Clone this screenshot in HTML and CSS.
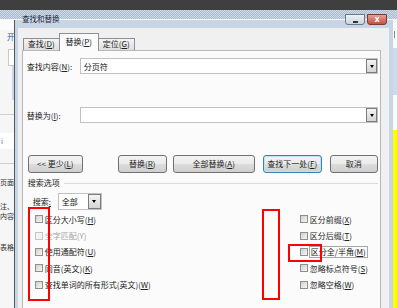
FILE: index.html
```html
<!DOCTYPE html>
<html>
<head>
<link rel="stylesheet" href="styles.css">
</head>
<body>

<div class="topbar"></div>
<div class="glass"></div>

<div class="desk">
    <div class="doc">
        <div class="doc-head"></div>
        <div class="doc-tab">开</div>
        <div class="doc-box"></div>
        <div class="doc-scroll"></div>
        <div class="doc-rule"></div>
        <div class="doc-field">i</div>
        <div class="doc-rule"></div>
        <div class="doc-text first">页面</div>
        <div class="doc-text gap">注、</div>
        <div class="doc-text">内容</div>
        <div class="doc-text gap2">表格</div>
    </div>

    <div class="dialog">
        <div class="client">
            <div class="tabs">
                <div class="tab">查找(<u>D</u>)</div>
                <div class="tab active">替换(<u>P</u>)</div>
                <div class="tab">定位(<u>G</u>)</div>
            </div>

            <div class="panel">
                <div class="field">
                    <label>查找内容(<u>N</u>):</label>
                    <div class="combo"><span class="value">分页符</span><span class="drop"></span></div>
                </div>
                <div class="field second">
                    <label>替换为(<u>I</u>):</label>
                    <div class="combo"><span class="value"></span><span class="drop"></span></div>
                </div>

                <div class="buttons">
                    <div class="btn less">&lt;&lt; 更少(<u>L</u>)</div>
                    <div class="btn replace">替换(<u>R</u>)</div>
                    <div class="btn replace-all">全部替换(<u>A</u>)</div>
                    <div class="btn find-next">查找下一处(<u>F</u>)</div>
                    <div class="btn cancel">取消</div>
                </div>

                <div class="group">搜索选项</div>

                <div class="search">
                    <label>搜索<u>:</u></label>
                    <div class="select"><span class="value">全部</span><span class="drop"></span></div>
                </div>

                <div class="options">
                    <div class="col">
                        <div class="opt"><span class="box"></span>区分大小写(<u>H</u>)</div>
                        <div class="opt off"><span class="box"></span>全字匹配(Y)</div>
                        <div class="opt"><span class="box"></span>使用通配符(<u>U</u>)</div>
                        <div class="opt"><span class="box"></span>同音(英文)(<u>K</u>)</div>
                        <div class="opt"><span class="box"></span>查找单词的所有形式(英文)(<u>W</u>)</div>
                    </div>
                    <div class="col">
                        <div class="opt"><span class="box"></span>区分前缀(<u>X</u>)</div>
                        <div class="opt"><span class="box"></span>区分后缀(<u>T</u>)</div>
                        <div class="opt"><span class="box"></span><span class="focus">区分全/半角(<u>M</u>)</span></div>
                        <div class="opt"><span class="box"></span>忽略标点符号(<u>S</u>)</div>
                        <div class="opt"><span class="box"></span>忽略空格(<u>W</u>)</div>
                    </div>
                </div>
            </div>
        </div>
    </div>

    <div class="side">
        <div class="side-top"><div class="side-mark"></div><div class="side-box"></div></div>
        <div class="side-yellow"></div>
    </div>
</div>

<!-- window caption over the glass strip -->
<div class="title">查找和替换</div>
<div class="capbtn minimize"><span></span></div>
<div class="capbtn close">x</div>

<!-- red marks drawn over the screenshot -->
<div class="mark mark-left"></div>
<div class="mark mark-mid"></div>
<div class="mark mark-small"></div>

</body>
</html>
```

FILE: styles.css
```css
body {
    margin: 0;
    padding: 0;
    width: 397px;
    height: 308px;
    overflow: hidden;
    position: relative;
    background: #f4f4f4;
    font-family: "Noto Sans CJK SC", "Noto Sans", sans-serif;
    font-size: 8px;
    color: #222;
}
u {
    text-decoration: underline;
}
.topbar {
    height: 10px;
    background: #3f3f3f;
}
.glass {
    height: 9px;
    border-bottom: 1px solid #f4f7fa;
    background: repeating-conic-gradient(#a9bbcf 0 25%, #cfdae6 0 50%) 0 0 / 2px 2px;
}
.desk {
    display: flex;
    height: 288px;
}

/* word document peeking out on the left */
.doc {
    width: 14px;
    overflow: hidden;
    background: #f6f6f6;
    display: flex;
    flex-direction: column;
    white-space: nowrap;
    font-size: 7px;
}
.doc-head {
    height: 10px;
    background: #fbfbfb;
}
.doc-tab {
    color: #2b5ca8;
    margin: 2px 0 0 7px;
    height: 10px;
    line-height: 10px;
    font-size: 7.5px;
}
.doc-box {
    margin: 7px 0 0 8px;
    height: 15px;
    border: 1px solid #c8c8c8;
    border-right: 0;
    background: #fff;
}
.doc-scroll {
    margin: 0 0 0 12px;
    height: 34px;
    background: #c9d8ea;
}
.doc-rule {
    height: 1px;
    background: #cfcfcf;
    margin-top: 14px;
}
.doc-field {
    margin-top: 18px;
    height: 16px;
    line-height: 16px;
    background: #fff;
    color: #3a6db5;
    padding-left: 1px;
}
.doc-text {
    height: 10px;
    line-height: 10px;
    color: #333;
}
.doc-text.first {
    margin-top: 13px;
}
.doc-text.gap {
    margin-top: 14px;
}
.doc-text.gap2 {
    margin-top: 21px;
}

/* the dialog */
.dialog {
    width: 378px;
    border-left: 1px solid #555;
    background: #c7d5e4;
    padding: 8px 4px 0 3px;
    display: flex;
}
.client {
    flex: 1;
    background: #f0f0f0;
    padding: 5px 8px 0 4px;
    display: flex;
    flex-direction: column;
}
.tabs {
    display: flex;
    align-items: flex-end;
    height: 17px;
    margin-left: 1px;
}
.tab {
    box-sizing: border-box;
    width: 37px;
    height: 12px;
    line-height: 10px;
    text-align: center;
    border: 1px solid #8c8e94;
    border-bottom: 0;
    background: linear-gradient(#f4f4f4, #dfdfdf);
}
.tab.active {
    width: 40px;
    height: 18px;
    line-height: 15px;
    margin-bottom: -1px;
    margin-left: -1px;
    margin-right: -1px;
    background: #fbfbfb;
    position: relative;
    z-index: 1;
}
.panel {
    flex: 1;
    border: 1px solid #b8b8b8;
    border-bottom: 0;
    background: #fbfbfb;
    padding: 7px 2px 0 4px;
}
.field {
    display: flex;
    height: 16px;
    align-items: center;
}
.field.second {
    margin-top: 33px;
}
.field label {
    width: 53px;
    white-space: nowrap;
}
.combo {
    flex: 1;
    height: 16px;
    box-sizing: border-box;
    border: 1px solid #bfc1c6;
    background: #fff;
    display: flex;
    align-items: center;
}
.combo .value,
.select .value {
    flex: 1;
    padding-left: 3px;
    color: #111;
}
.drop {
    width: 11px;
    height: 14px;
    box-sizing: border-box;
    border: 1px solid #7c7c7c;
    background: linear-gradient(#f4f4f4, #d4d4d4);
    display: flex;
    align-items: center;
    justify-content: center;
}
.drop::after {
    content: "";
    border-left: 2.5px solid transparent;
    border-right: 2.5px solid transparent;
    border-top: 3px solid #000;
}

.buttons {
    display: flex;
    height: 18px;
    margin-top: 32px;
}
.btn {
    box-sizing: border-box;
    height: 18px;
    line-height: 16px;
    text-align: center;
    white-space: nowrap;
    border: 1px solid #707070;
    border-radius: 3px;
    background: linear-gradient(#f3f3f3 0, #ebebeb 50%, #dddddd 50%, #cfcfcf 100%);
}
.btn.less {
    width: 55px;
    margin-left: 1px;
}
.btn.replace {
    width: 49px;
    margin-left: 35px;
}
.btn.replace-all {
    width: 82px;
    margin-left: 6px;
}
.btn.find-next {
    width: 59px;
    margin-left: 8px;
    border-color: #3c7fb1;
    box-shadow: inset 0 0 0 1px #b9e3f8;
}
.btn.cancel {
    width: 48px;
    margin-left: 8px;
}

.group {
    display: flex;
    align-items: center;
    height: 10px;
    line-height: 10px;
    margin: 5px 0 0 1px;
}
.group::after {
    content: "";
    flex: 1;
    height: 1px;
    margin-left: 4px;
    background: #dcdcdc;
}

.search {
    display: flex;
    align-items: center;
    height: 17px;
    margin-top: 5px;
}
.search label {
    width: 25px;
    margin-left: 6px;
}
.select {
    width: 44px;
    height: 17px;
    box-sizing: border-box;
    border: 1px solid #bfc1c6;
    background: #fff;
    display: flex;
    align-items: center;
}
.select .drop {
    width: 13px;
    height: 15px;
}

.options {
    display: grid;
    grid-template-columns: 265px 1fr;
    margin: 1px 0 0 8px;
}
.opt {
    display: flex;
    align-items: center;
    height: 16.4px;
    white-space: nowrap;
}
.opt .box {
    width: 8px;
    height: 8px;
    box-sizing: border-box;
    border: 1px solid #8e8f8f;
    background: linear-gradient(135deg, #cfcfcf, #f7f7f7);
    margin-right: 2px;
    flex: none;
}
.opt.off {
    color: #a3a3a3;
}
.opt.off .box {
    border-color: #c4c4c4;
    background: #f3f3f3;
}
.focus {
    border: 1px solid #a8a8a8;
    padding: 0 1px;
    margin-left: -1px;
    line-height: 10px;
}

/* document on the right */
.side {
    width: 4px;
    display: flex;
    flex-direction: column;
    overflow: hidden;
}
.side-top {
    height: 110px;
    background: #fafafa;
    padding-top: 11px;
    box-sizing: border-box;
}
.side-mark {
    width: 1px;
    height: 7px;
    margin-left: 1px;
    background: #888;
}
.side-box {
    margin-top: 10px;
    height: 47px;
    background: #cfdbe8;
}
.side-yellow {
    flex: 1;
    background: #ffff00;
}

/* caption */
.title {
    position: absolute;
    left: 22px;
    top: 14px;
    line-height: 10px;
    color: #1c2a3a;
    font-size: 7.5px;
}
.capbtn {
    position: absolute;
    top: 14px;
    width: 20px;
    height: 11px;
    box-sizing: border-box;
    border: 1px solid #6d7886;
    border-radius: 0 0 3px 3px;
    display: flex;
    align-items: center;
    justify-content: center;
}
.minimize {
    left: 345px;
    background: linear-gradient(#eef2f7, #c9d3de);
}
.minimize span {
    width: 5px;
    height: 2px;
    background: #333;
    margin-top: 4px;
}
.close {
    left: 367px;
    background: linear-gradient(#e4a093, #c7503f);
    border-color: #7a3b34;
    color: #fff;
    font-family: "DejaVu Sans", sans-serif;
    font-weight: bold;
    font-size: 8px;
    line-height: 9px;
}

/* annotations */
.mark {
    position: absolute;
    box-sizing: border-box;
    border: 2px solid #f00;
}
.mark-left {
    left: 28px;
    top: 207px;
    width: 22px;
    height: 94px;
}
.mark-mid {
    left: 262px;
    top: 209px;
    width: 18px;
    height: 91px;
}
.mark-small {
    left: 288px;
    top: 244px;
    width: 34px;
    height: 18px;
}
```
